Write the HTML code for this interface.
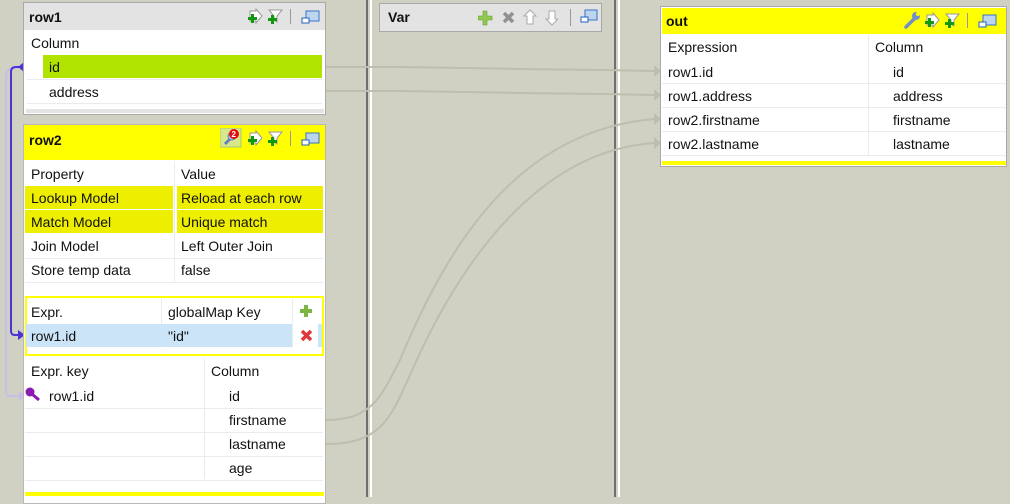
<!DOCTYPE html>
<html><head><meta charset="utf-8"><style>
*{margin:0;padding:0;box-sizing:border-box}
body{width:1010px;height:497px;overflow:hidden;background:#d1d1c3;font-family:"Segoe UI","Liberation Sans",sans-serif;font-size:14px;color:#111;position:relative}
.abs{position:absolute}
.panel{position:absolute;background:#fff;border:1px solid #a9a9a9}
.t{position:absolute;white-space:nowrap;line-height:24px;height:24px}
.hl{position:absolute;background:#eeee00}
.b{font-weight:bold;font-size:14px}
.hline{position:absolute;height:1px;background:#e8ecf0}
.vline{position:absolute;width:1px;background:#e8ecf0}
</style></head><body>

<div class="abs" style="left:366px;top:0;width:2px;height:497px;background:#6e6e6e"></div>
<div class="abs" style="left:370px;top:0;width:2px;height:497px;background:#fff"></div>
<div class="abs" style="left:614px;top:0;width:2px;height:497px;background:#6e6e6e"></div>
<div class="abs" style="left:618px;top:0;width:2px;height:497px;background:#fff"></div>

<svg class="abs" style="left:0;top:0" width="1010" height="497">
<g fill="none" stroke="#bebeae" stroke-width="2">
<path d="M325 67 L400 67 L465 68 L520 69 L600 70 L655 71"/>
<path d="M325 91 L400 91 L465 92 L520 93 L600 94 L655 95"/>
<path d="M325 420 C 370 420, 380 400, 400 360 C 450 240, 520 130, 655 119"/>
<path d="M325 444 C 380 444, 390 420, 410 375 C 460 260, 540 150, 655 143"/>
</g>
<g fill="#bebeae"><path d="M654 65 L661 71 L654 77Z"/><path d="M654 89 L661 95 L654 101Z"/><path d="M654 113 L661 119 L654 125Z"/><path d="M654 137 L661 143 L654 149Z"/></g>
<path d="M24 396 L10 396 Q6 396 6 392 L6 76 Q6 70 12 68 L20 67" fill="none" stroke="#c8bce8" stroke-width="2"/>
<path d="M18 396 L24 396" stroke="#c8bce8" stroke-width="2"/>
<path d="M19 391 L25 396 L19 401Z" fill="#c8bce8"/>
<path d="M24 335 L15 335 Q11 335 11 331 L11 72 Q11 67 16 67 L19 67" fill="none" stroke="#4a34d8" stroke-width="2"/>
<path d="M18 330 L25 335 L18 340Z" fill="#4a34d8"/>
<path d="M24 62 L18 67 L24 72Z" fill="#4a34d8"/>
</svg>

<div class="panel" style="left:23px;top:2px;width:303px;height:113px">
 <div class="abs" style="left:0;top:0;width:301px;height:27px;background:#e3e3e3"></div>
 <div class="t b" style="left:5px;top:2px">row1</div>
 <svg class="abs" style="left:222px;top:5px" width="78" height="18">
  <path d="M4 3 h6 v-2 l6 7 l-6 7 v-2 h-6z" fill="#fff" stroke="#999"/><path d="M5 9 h3 v-3 h3 v3 h3 v3 h-3 v3 h-3 v-3 h-3z" fill="#119911" transform="translate(-3,0)"/>
  <path d="M23 2 h13 l-5 6 v6 l-3 -2 v-4z" fill="#fff" stroke="#999"/><path d="M22 10 h3 v-3 h3 v3 h3 v3 h-3 v3 h-3 v-3 h-3z" fill="#119911"/>
  <rect x="44" y="1" width="1" height="15" fill="#999"/>
  <rect x="60" y="3" width="13" height="10" fill="#bcd6f0" stroke="#3a72c8"/><rect x="56" y="10" width="7" height="5" fill="#fff" stroke="#2060c0"/>
 </svg>
 <div class="t" style="left:7px;top:28px">Column</div>
 <div class="abs" style="left:19px;top:52px;width:279px;height:23px;background:#b0e400"></div>
 <div class="t" style="left:25px;top:52px">id</div>
 <div class="hline" style="left:3px;top:76px;width:295px"></div>
 <div class="t" style="left:25px;top:77px">address</div>
 <div class="hline" style="left:3px;top:100px;width:295px"></div>
 <div class="abs" style="left:2px;top:106px;width:298px;height:4px;background:#e3e3e3"></div>
</div>

<div class="panel" style="left:23px;top:124px;width:303px;height:380px;border-color:#b8b8b8">
 <div class="abs" style="left:0;top:0;width:301px;height:35px;background:#ffff00"></div>
 <div class="t b" style="left:5px;top:3px">row2</div>
 <svg class="abs" style="left:196px;top:3px" width="104" height="20">
  <rect x="0" y="0" width="21" height="19" fill="#d8e888" stroke="#a8c878"/>
  <path d="M5 16 l6 -6" stroke="#6080c0" stroke-width="3"/><circle cx="12" cy="8" r="4" fill="#b0c8e8" stroke="#6080c0"/>
  <circle cx="14" cy="6" r="5" fill="#e01010"/><text x="11.5" y="9" font-size="8" font-weight="bold" fill="#fff" font-family="Liberation Sans">2</text>
  <g transform="translate(26,2)"><path d="M4 3 h6 v-2 l6 7 l-6 7 v-2 h-6z" fill="#fff" stroke="#999"/><path d="M2 9 h3 v-3 h3 v3 h3 v3 h-3 v3 h-3 v-3 h-3z" fill="#119911"/></g>
  <g transform="translate(26,2)"><path d="M23 2 h13 l-5 6 v6 l-3 -2 v-4z" fill="#fff" stroke="#999"/><path d="M22 10 h3 v-3 h3 v3 h3 v3 h-3 v3 h-3 v-3 h-3z" fill="#119911"/>
  <rect x="44" y="1" width="1" height="15" fill="#999"/>
  <rect x="60" y="3" width="13" height="10" fill="#bcd6f0" stroke="#3a72c8"/><rect x="56" y="10" width="7" height="5" fill="#fff" stroke="#2060c0"/></g>
 </svg>
 <div class="t" style="left:7px;top:37px">Property</div><div class="t" style="left:157px;top:37px">Value</div>
 <div class="vline" style="left:150px;top:36px;height:122px"></div>
 <div class="hl" style="left:1px;top:61px;width:148px;height:23px"></div><div class="hl" style="left:153px;top:61px;width:146px;height:23px"></div>
 <div class="hl" style="left:1px;top:85px;width:148px;height:23px"></div><div class="hl" style="left:153px;top:85px;width:146px;height:23px"></div>
 <div class="t" style="left:7px;top:61px">Lookup Model</div><div class="t" style="left:157px;top:61px">Reload at each row</div>
 <div class="t" style="left:7px;top:85px">Match Model</div><div class="t" style="left:157px;top:85px">Unique match</div>
 <div class="t" style="left:7px;top:109px">Join Model</div><div class="t" style="left:157px;top:109px">Left Outer Join</div>
 <div class="hline" style="left:1px;top:133px;width:298px"></div>
 <div class="t" style="left:7px;top:133px">Store temp data</div><div class="t" style="left:157px;top:133px">false</div>
 <div class="hline" style="left:1px;top:157px;width:298px"></div>
 <div class="abs" style="left:1px;top:171px;width:299px;height:60px;border:2px solid #ffff00"></div>
 <div class="t" style="left:7px;top:175px">Expr.</div><div class="t" style="left:144px;top:175px">globalMap Key</div>
 <div class="vline" style="left:137px;top:174px;height:49px"></div><div class="vline" style="left:268px;top:174px;height:49px"></div>
 <svg class="abs" style="left:276px;top:180px" width="12" height="12"><path d="M4 0 h4 v4 h4 v4 h-4 v4 h-4 v-4 h-4 v-4 h4z" fill="#7ab640"/></svg>
 <div class="abs" style="left:2px;top:199px;width:266px;height:23px;background:#cce4f7"></div>
 <div class="abs" style="left:294px;top:199px;width:4px;height:23px;background:#cce4f7"></div>
 <div class="t" style="left:7px;top:199px">row1.id</div><div class="t" style="left:144px;top:199px">"id"</div>
 <svg class="abs" style="left:276px;top:204px" width="13" height="13"><path d="M2 2 L11 11 M11 2 L2 11" stroke="#e03838" stroke-width="3.5"/></svg>
 <div class="t" style="left:7px;top:234px">Expr. key</div><div class="t" style="left:187px;top:234px">Column</div>
 <div class="vline" style="left:180px;top:234px;height:120px"></div>
 <svg class="abs" style="left:1px;top:262px" width="16" height="14"><circle cx="5" cy="5" r="4.5" fill="#8a1ab0"/><path d="M7 7 L14 13" stroke="#8a1ab0" stroke-width="3"/></svg>
 <div class="t" style="left:25px;top:259px">row1.id</div><div class="t" style="left:205px;top:259px">id</div>
 <div class="hline" style="left:1px;top:283px;width:298px"></div>
 <div class="t" style="left:205px;top:283px">firstname</div>
 <div class="hline" style="left:1px;top:307px;width:298px"></div>
 <div class="t" style="left:205px;top:307px">lastname</div>
 <div class="hline" style="left:1px;top:331px;width:298px"></div>
 <div class="t" style="left:205px;top:331px">age</div>
 <div class="hline" style="left:1px;top:355px;width:298px"></div>
 <div class="abs" style="left:1px;top:367px;width:299px;height:4px;background:#ffff00"></div>
</div>

<div class="panel" style="left:379px;top:3px;width:223px;height:29px;background:#e3e3e3">
 <div class="t b" style="left:8px;top:1px">Var</div>
 <svg class="abs" style="left:98px;top:5px" width="80" height="18">
  <path d="M5 2 h4 v5 h5 v4 h-5 v5 h-4 v-5 h-5 v-4 h5z" fill="#90c850" stroke="#6a9a30" stroke-width=".6"/>
  <path d="M26 4 L35 13 M35 4 L26 13" stroke="#909090" stroke-width="3.5"/>
  <path d="M52 1 l6 6 h-3 v8 h-6 v-8 h-3z" fill="#fff" stroke="#aaa"/>
  <path d="M74 16 l6 -6 h-3 v-8 h-6 v8 h-3z" fill="#fff" stroke="#aaa"/>
 </svg>
 <div class="abs" style="left:190px;top:5px;width:1px;height:17px;background:#999"></div>
 <svg class="abs" style="left:199px;top:5px" width="20" height="16"><rect x="6" y="1" width="12" height="10" fill="#bcd6f0" stroke="#3a72c8"/><rect x="2" y="8" width="7" height="5" fill="#fff" stroke="#2060c0"/></svg>
</div>

<div class="panel" style="left:660px;top:6px;width:347px;height:161px">
 <div class="abs" style="left:1px;top:1px;width:344px;height:26px;background:#ffff00"></div>
 <div class="t b" style="left:5px;top:2px">out</div>
 <svg class="abs" style="left:242px;top:4px" width="100" height="20">
  <path d="M3 16 l8 -8" stroke="#7090c8" stroke-width="3.5" stroke-linecap="round"/><circle cx="13" cy="5" r="4" fill="#7090c8"/><circle cx="15" cy="3" r="2" fill="#ffff00"/>
  <g transform="translate(20,1)"><path d="M4 3 h6 v-2 l6 7 l-6 7 v-2 h-6z" fill="#fff" stroke="#999"/><path d="M2 9 h3 v-3 h3 v3 h3 v3 h-3 v3 h-3 v-3 h-3z" fill="#119911"/></g>
  <g transform="translate(20,1)"><path d="M23 2 h13 l-5 6 v6 l-3 -2 v-4z" fill="#fff" stroke="#999"/><path d="M22 10 h3 v-3 h3 v3 h3 v3 h-3 v3 h-3 v-3 h-3z" fill="#119911"/>
  <rect x="44" y="1" width="1" height="15" fill="#999"/>
  <rect x="60" y="3" width="13" height="10" fill="#bcd6f0" stroke="#3a72c8"/><rect x="56" y="10" width="7" height="5" fill="#fff" stroke="#2060c0"/></g>
 </svg>
 <div class="t" style="left:7px;top:28px">Expression</div><div class="t" style="left:214px;top:28px">Column</div>
 <div class="vline" style="left:207px;top:28px;height:120px"></div>
 <div class="t" style="left:7px;top:53px">row1.id</div><div class="t" style="left:232px;top:53px">id</div>
 <div class="hline" style="left:1px;top:76px;width:344px"></div>
 <div class="t" style="left:7px;top:77px">row1.address</div><div class="t" style="left:232px;top:77px">address</div>
 <div class="hline" style="left:1px;top:100px;width:344px"></div>
 <div class="t" style="left:7px;top:101px">row2.firstname</div><div class="t" style="left:232px;top:101px">firstname</div>
 <div class="hline" style="left:1px;top:124px;width:344px"></div>
 <div class="t" style="left:7px;top:125px">row2.lastname</div><div class="t" style="left:232px;top:125px">lastname</div>
 <div class="hline" style="left:1px;top:148px;width:344px"></div>
 <div class="abs" style="left:1px;top:154px;width:344px;height:4px;background:#ffff00"></div>
</div>
</body></html>
